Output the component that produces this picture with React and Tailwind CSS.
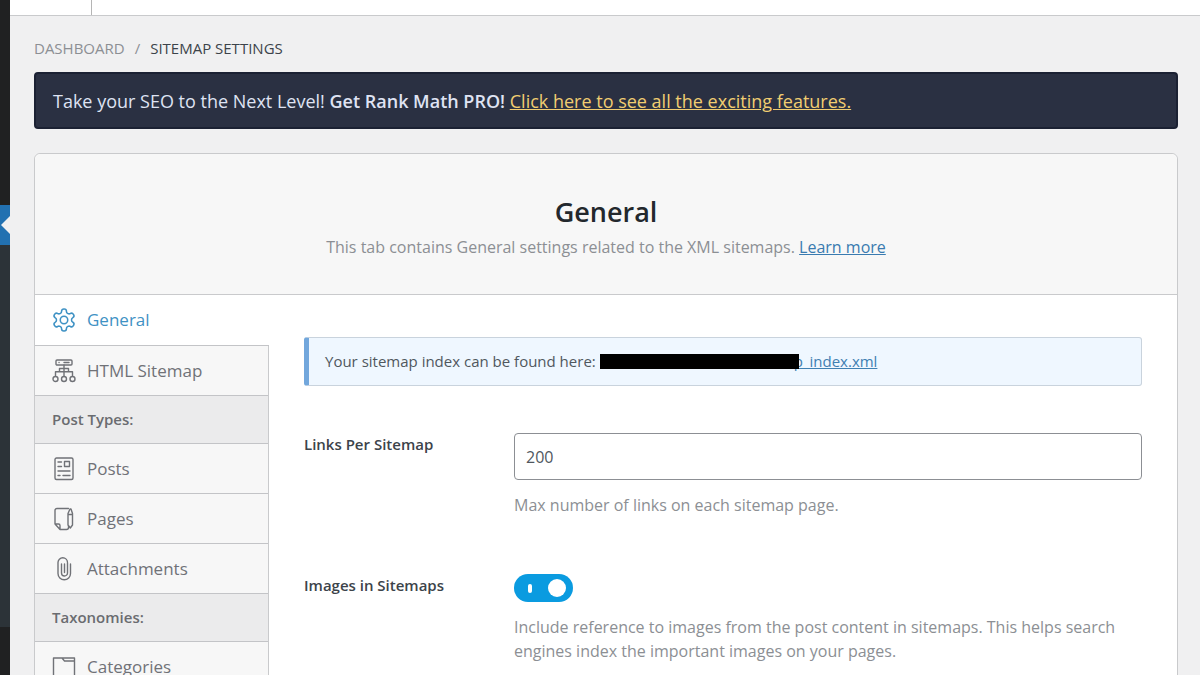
import React, { useState } from "react";

function Icon({ children }) {
  return (
    <svg
      viewBox="0 0 24 24"
      className="size-6 shrink-0"
      fill="none"
      stroke="currentColor"
      strokeWidth="1.4"
      strokeLinecap="round"
      strokeLinejoin="round"
      aria-hidden="true"
    >
      {children}
    </svg>
  );
}

const GearIcon = () => (
  <Icon>
    <g transform="translate(-1.2 -1.2) scale(1.1)">
      <path d="M12.22 2h-.44a2 2 0 0 0-2 2v.18a2 2 0 0 1-1 1.73l-.43.25a2 2 0 0 1-2 0l-.15-.08a2 2 0 0 0-2.73.73l-.22.38a2 2 0 0 0 .73 2.73l.15.1a2 2 0 0 1 1 1.72v.51a2 2 0 0 1-1 1.74l-.15.09a2 2 0 0 0-.73 2.73l.22.38a2 2 0 0 0 2.73.73l.15-.08a2 2 0 0 1 2 0l.43.25a2 2 0 0 1 1 1.73V20a2 2 0 0 0 2 2h.44a2 2 0 0 0 2-2v-.18a2 2 0 0 1 1-1.73l.43-.25a2 2 0 0 1 2 0l.15.08a2 2 0 0 0 2.73-.73l.22-.39a2 2 0 0 0-.73-2.73l-.15-.08a2 2 0 0 1-1-1.74v-.5a2 2 0 0 1 1-1.74l.15-.09a2 2 0 0 0 .73-2.73l-.22-.38a2 2 0 0 0-2.73-.73l-.15.08a2 2 0 0 1-2 0l-.43-.25a2 2 0 0 1-1-1.73V4a2 2 0 0 0-2-2z" />
      <circle cx="12" cy="12" r="3.400" />
    </g>
  </Icon>
);

const SitemapIcon = () => (
  <Icon>
    <rect x="4" y="1" width="16" height="5" rx="1" />
    <path d="M7 3.500h.1M12 3.500h5M12 6v11M7.500 12.500V9.500h9v3M3.500 17v-4.300h17V17" />
    <circle cx="3.500" cy="20" r="2.500" />
    <circle cx="12" cy="20" r="2.500" />
    <circle cx="20.500" cy="20" r="2.500" />
  </Icon>
);

const PostIcon = () => (
  <Icon>
    <rect x="3" y="1" width="18" height="21.500" rx="1.500" />
    <path d="M6 5h3.500M6 9.500h3.500M12.500 4.500h5v5h-5zM6 14h12M6 18.500h2M11 18.500h7" />
  </Icon>
);

const PageIcon = () => (
  <Icon>
    <path d="M16.500 1.500H5a2 2 0 0 0-2 2V17l5 5.500h6.500a2 2 0 0 0 2-2v-1M3 17h3.500A1.500 1.500 0 0 1 8 18.500v4" />
    <path d="M16 18V6.500l2-4.500h1l1.500 4.500V18L18.300 21zM16 7.500h4.500" />
  </Icon>
);

const ClipIcon = () => (
  <Icon>
    <path d="M15.500 6v10a3 3 0 0 1-6 0V7M12.500 7v8.500M18.500 7v9.500a6.200 6.200 0 0 1-12.500 0V5.500a4.700 4.700 0 0 1 9.500 0" />
  </Icon>
);

const FolderIcon = () => (
  <Icon>
    <path d="M1.500 21.500V3H10l2.500 3h10v15.500zM10 3h12.500v3" />
  </Icon>
);

const menu = [
  { label: "General", Icon: GearIcon, active: true },
  { label: "HTML Sitemap", Icon: SitemapIcon },
  { label: "Post Types:", heading: true },
  { label: "Posts", Icon: PostIcon },
  { label: "Pages", Icon: PageIcon },
  { label: "Attachments", Icon: ClipIcon },
  { label: "Taxonomies:", heading: true },
  { label: "Categories", Icon: FolderIcon },
];

function AdminRail() {
  return (
    <div className="flex w-[10px] shrink-0 flex-col bg-[#202122]">
      <div className="h-[205px]" />
      <div className="flex h-10 items-center justify-end bg-[#2271b1]">
        <svg viewBox="0 0 9 18" className="h-[18px] w-[9px]" aria-hidden="true">
          <path d="M9 0v18L0 9z" fill="#f0f0f1" />
        </svg>
      </div>
      <div className="h-[382px] bg-[#2c3338]" />
    </div>
  );
}

function SideMenu() {
  return (
    <nav className="w-[234px] shrink-0 border-r border-[#c9cacc] bg-[#f7f7f7]">
      {menu.map(({ label, Icon: ItemIcon, active, heading }) =>
        heading ? (
          <h2
            key={label}
            className="flex h-12 items-center border-b border-[#c3c4c7] bg-[#ebebec] px-[17px] text-[15px] font-semibold text-[#6a6c70]"
          >
            {label}
          </h2>
        ) : (
          <a
            key={label}
            href="#"
            className={
              active
                ? "-mr-px flex h-[51px] items-center gap-[11px] border-b border-[#c3c4c7] bg-white px-[17px] text-[17px] text-[#3f92c4]"
                : "flex h-[50px] items-center gap-[11px] border-b border-[#c3c4c7] px-[17px] text-[17px] text-[#707277]"
            }
          >
            <ItemIcon />
            {label}
          </a>
        )
      )}
    </nav>
  );
}

function Toggle() {
  const [on, setOn] = useState(true);
  return (
    <label htmlFor="images" className="relative block h-7 w-[59px] cursor-pointer">
      <input
        id="images"
        type="checkbox"
        role="switch"
        checked={on}
        onChange={(e) => setOn(e.target.checked)}
        className="peer block h-7 w-[59px] cursor-pointer appearance-none rounded-full bg-[#a0a5aa] checked:bg-[#0a9be0]"
      />
      <span className="pointer-events-none absolute top-[10px] left-[14px] h-[9px] w-1 rounded-sm bg-white" />
      <span className="pointer-events-none absolute top-[5px] left-[5px] size-[18px] rounded-full bg-white peer-checked:left-[34px]" />
    </label>
  );
}

export default function App() {
  const [links, setLinks] = useState("200");
  return (
    <div className="flex h-screen overflow-hidden bg-[#f0f0f1] font-['Open_Sans','Noto_Sans',sans-serif] text-[#3c434a]">
      <AdminRail />
      <div className="min-w-0 flex-1">
        <header className="flex h-4 border-b border-[#c9cacc] bg-white">
          <div className="w-[82px] border-r border-[#b5b5b5]" />
        </header>

        <main className="px-6 pr-[22px]">
          <nav aria-label="Breadcrumb" className="flex h-14 items-center gap-[10px] pt-2 text-[15px]">
            <a href="#" className="text-[#8c8f94]">DASHBOARD</a>
            <span className="text-[#8c8f94]">/</span>
            <span className="text-[#3c434a]">SITEMAP SETTINGS</span>
          </nav>

          <div className="flex h-[57px] items-center rounded-[4px] border-2 border-[#1b2133] bg-[#2a3042] px-[17px] text-lg text-[#dfe3f3]">
            <p>
              Take your SEO to the Next Level! <strong className="font-semibold">Get Rank Math PRO!</strong>{" "}
              <a href="#" className="text-[#f1cd71] underline">
                Click here to see all the exciting features.
              </a>
            </p>
          </div>

          <section className="mt-6 rounded-t-[6px] border border-[#c9cacc] bg-white">
            <header className="flex h-[141px] flex-col items-center rounded-t-[6px] border-b border-[#c9cacc] bg-[#f7f7f7] pt-10">
              <h1 className="text-[27px] leading-9 font-semibold text-[#23282d]">General</h1>
              <p className="mt-[5px] text-base leading-6 text-[#8c8f94]">
                This tab contains General settings related to the XML sitemaps.{" "}
                <a href="#" className="text-[#3a7bb0] underline">Learn more</a>
              </p>
            </header>

            <div className="flex">
              <SideMenu />
              <div className="min-w-0 flex-1 pt-[42px] pr-[35px] pl-[35px]">
                <div className="flex h-[49px] items-center rounded-[3px] border border-l-[5px] border-[#c9d3dd] border-l-[#72a7dc] bg-[#eff7ff] px-4 text-[15px] text-[#50575e]">
                  <span>Your sitemap index can be found here:</span>
                  <span className="z-10 ml-1 h-[15px] w-[199px] bg-black" />
                  <a href="#" className="-ml-[5px] text-[#3f80b2] underline">p_index.xml</a>
                </div>

                <div className="mt-[47px] flex">
                  <label htmlFor="links" className="w-[210px] shrink-0 text-[15px] leading-[22px] font-semibold text-[#3c434a]">
                    Links Per Sitemap
                  </label>
                  <div className="flex-1">
                    <input
                      id="links"
                      type="text"
                      value={links}
                      onChange={(e) => setLinks(e.target.value)}
                      className="block h-[47px] w-full rounded-[4px] border border-[#8c8f94] bg-white px-[11px] text-base text-[#50575e]"
                    />
                    <p className="mt-[13px] text-base leading-6 text-[#8c8f94]">Max number of links on each sitemap page.</p>
                  </div>
                </div>

                <div className="mt-[57px] flex">
                  <label htmlFor="images" className="w-[210px] shrink-0 text-[15px] leading-[22px] font-semibold text-[#3c434a]">
                    Images in Sitemaps
                  </label>
                  <div className="flex-1">
                    <Toggle />
                    <p className="mt-[13px] max-w-[620px] text-base leading-6 text-[#8c8f94]">
                      Include reference to images from the post content in sitemaps. This helps search engines index the
                      important images on your pages.
                    </p>
                  </div>
                </div>
              </div>
            </div>
          </section>
        </main>
      </div>
    </div>
  );
}
